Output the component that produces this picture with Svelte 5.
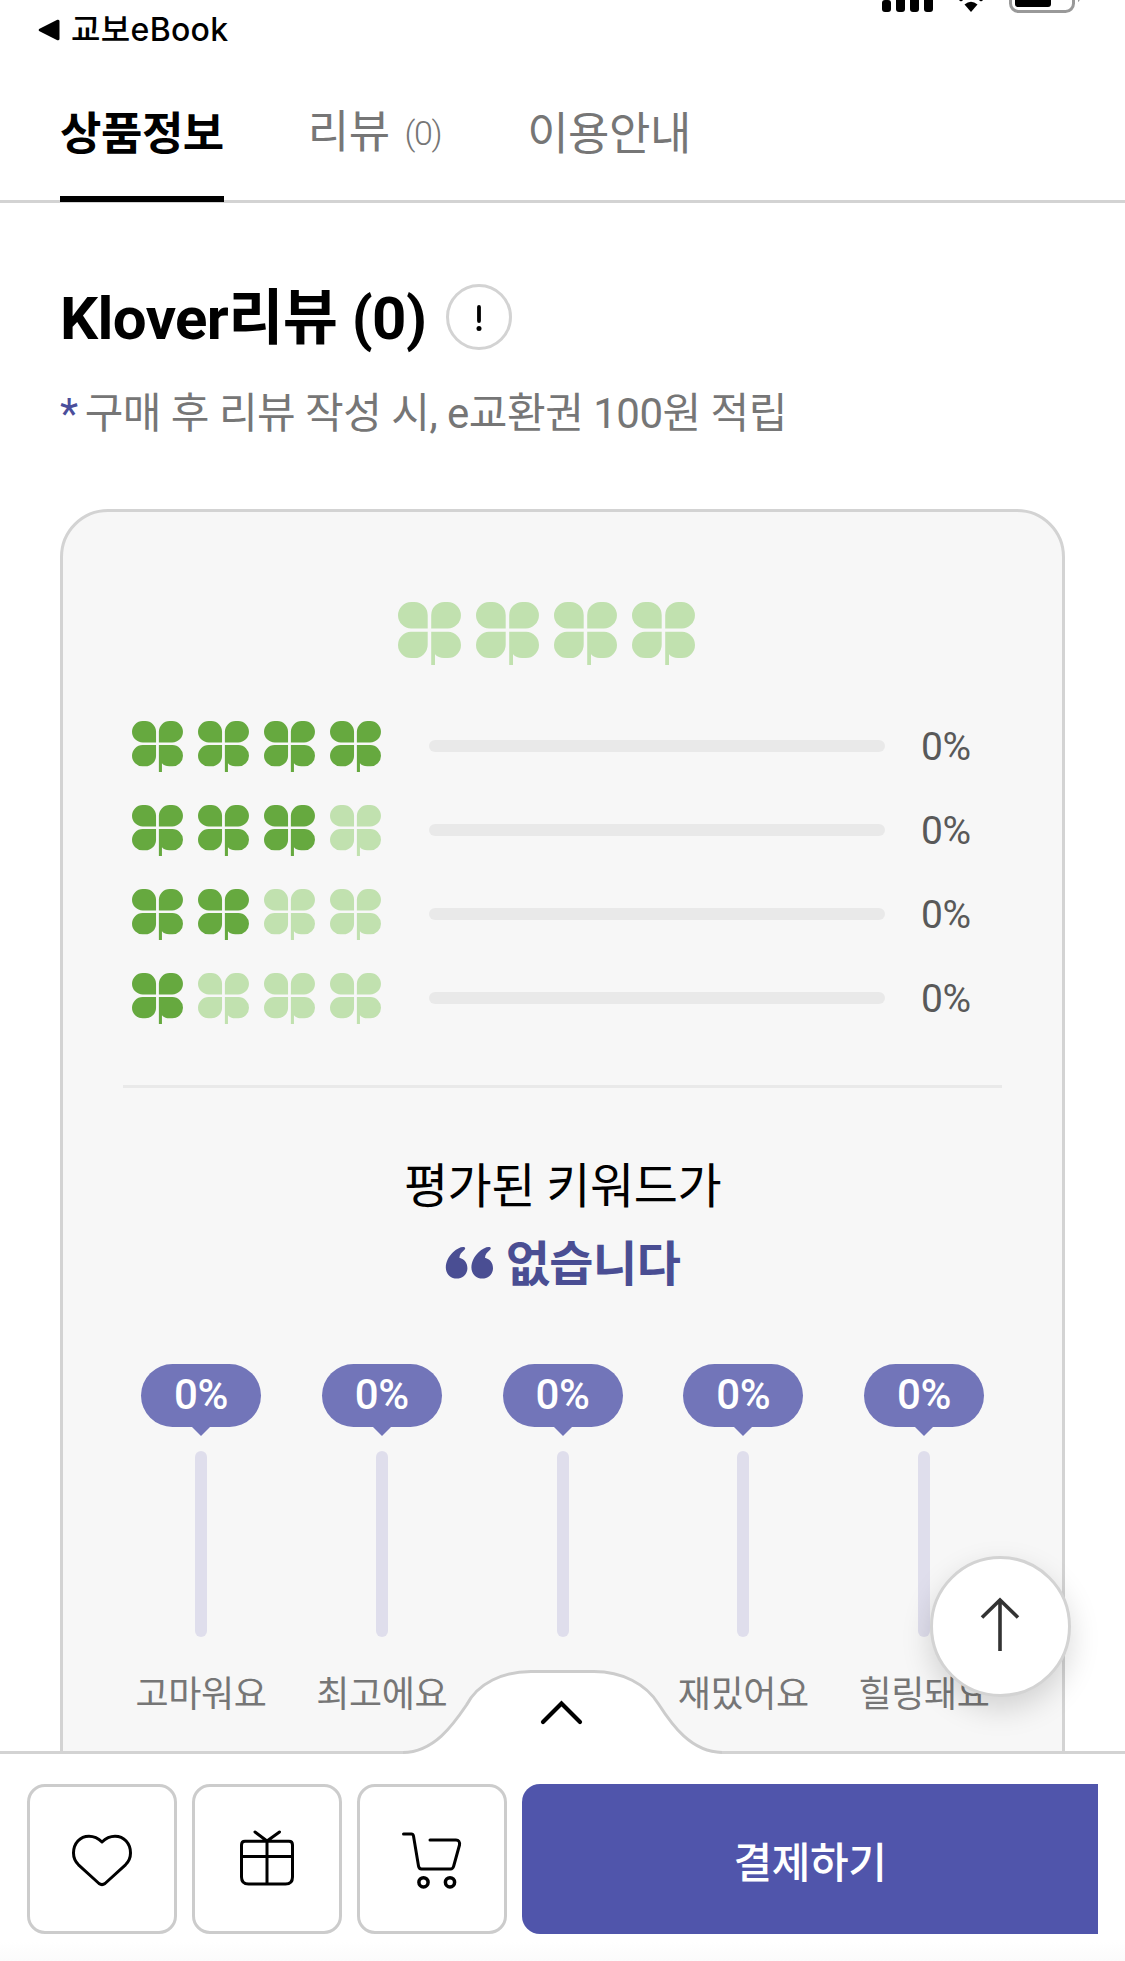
<script>
  const grades = [
    { score: 4, percent: 0 },
    { score: 3, percent: 0 },
    { score: 2, percent: 0 },
    { score: 1, percent: 0 }
  ];

  const keywords = [
    { label: "고마워요", percent: 0 },
    { label: "최고에요", percent: 0 },
    { label: "", percent: 0 },
    { label: "재밌어요", percent: 0 },
    { label: "힐링돼요", percent: 0 }
  ];
</script>

{#snippet clover(on)}
  <svg class="clover" class:on viewBox="0 0 63 63" aria-hidden="true">
    <path d="M29.7 26.5H13.25A13.25 13.25 0 0 1 13.25 0H16.5A13.2 13.2 0 0 1 29.7 13.2Z" />
    <path d="M33.2 26.5H49.7A13.25 13.25 0 0 0 49.7 0H46.4A13.2 13.2 0 0 0 33.2 13.2Z" />
    <path d="M29.7 29.8H13.1A13.1 13.1 0 0 0 13.1 56H16.5A13.2 13.2 0 0 0 29.7 42.8Z" />
    <path d="M33.2 29.8V63H37V52.3C39.5 55 42 56 46 56H49.9A13.1 13.1 0 0 0 49.9 29.8Z" />
  </svg>
{/snippet}

<div class="page">
  <main class="content">
    <header class="status">
      <div class="back">
        <svg width="22" height="22" viewBox="0 0 22 22"><path d="M20 2.2V19.8L2.2 11Z" stroke="#000" stroke-width="3" stroke-linejoin="round" /></svg>
        <span>교보eBook</span>
      </div>
      <svg class="indicators" width="200" height="14" viewBox="0 0 200 14">
        <rect x="2" y="0" width="9" height="12" rx="3" />
        <rect x="16" y="-6" width="9" height="18" rx="3" />
        <rect x="30" y="-6" width="9" height="18" rx="3" />
        <rect x="44" y="-6" width="9" height="18" rx="3" />
        <path d="M84.5 4.5Q91 -1 97.5 4.5L91 12Z" />
        <path d="M79.5 0Q81 2 82.5 0ZM99.5 0Q101 2 102.5 0Z" stroke="#000" />
        <rect x="130.5" y="-20" width="63" height="31.5" rx="8" fill="none" stroke="#999" stroke-width="3" />
        <rect x="135" y="-10" width="36" height="17" rx="3" />
        <path d="M198 -4V2Q200 1 200 -2Z" fill="#999" />
      </svg>
    </header>

    <nav class="tabs">
      <a class="tab active" href="#info">상품정보</a>
      <a class="tab with-count" href="#review">리뷰 <span class="count">(0)</span></a>
      <a class="tab" href="#guide">이용안내</a>
    </nav>

    <section class="review">
      <div class="title">
        <h2>Klover리뷰 (0)</h2>
        <button class="info" aria-label="리뷰 안내">
          <svg width="60" height="60" viewBox="0 0 60 60"><path d="M30 20V34" stroke="#000" stroke-width="3.8" stroke-linecap="round" /><circle cx="30" cy="41.500" r="2.5" /></svg>
        </button>
      </div>
      <p class="notice"><span class="star">*</span>구매 후 리뷰 작성 시, e교환권 100원 적립</p>

      <div class="card">
        <div class="total">
          {#each [1, 2, 3, 4] as n}
            {@render clover(false)}
          {/each}
        </div>

        <ul class="grades">
          {#each grades as grade}
            <li>
              <div class="clovers">
                {#each [1, 2, 3, 4] as n}
                  {@render clover(n <= grade.score)}
                {/each}
              </div>
              <div class="bar"><div class="fill" style="width: {grade.percent}%"></div></div>
              <span class="percent">{grade.percent}%</span>
            </li>
          {/each}
        </ul>

        <div class="best">
          <p>평가된 키워드가</p>
          <p class="none">
            <svg width="49" height="34" viewBox="0 0 49 34">
              <path id="quote" d="M19.5 1.2C16.5 .4 12 2.6 8 6.2C3.4 10.4 .8 16 .8 21.5C.8 28 5.6 32.6 11.6 32.6C17.8 32.6 22.4 28 22.4 22.2C22.4 17 19.6 13.4 14.4 11.8C14.6 8.4 16.4 6.4 19 4.2C20.4 3 20.6 1.8 19.5 1.2Z" />
              <use href="#quote" x="25.6" />
            </svg>
            <strong>없습니다</strong>
          </p>
        </div>

        <ul class="keywords">
          {#each keywords as keyword}
            <li>
              <span class="bubble">{keyword.percent}%</span>
              <div class="track"><div class="level" style="height: {keyword.percent}%"></div></div>
              <span class="label">{keyword.label}</span>
            </li>
          {/each}
        </ul>
      </div>
    </section>
  </main>

  <footer class="actions">
    <!-- raised handle of the bottom sheet -->
    <svg class="handle" width="330" height="87" viewBox="0 0 330 87">
      <path d="M4 87V83.5C35 83 54 55 67.500 35C79 13 104 1.5 132 1.5H195C223 1.5 247 14 259.500 34C273 55 292 83 323 83.5V87Z" fill="#fff" />
      <path d="M4 82.500C35 82 54 55 67.500 35C79 13 104 1.5 132 1.5H195C223 1.5 247 14 259.500 34C273 55 292 82 323 82.500" fill="none" stroke="#ccc" stroke-width="3" />
      <path d="M144 52L162.500 33.500L181 52" fill="none" stroke="#000" stroke-width="4.2" stroke-linecap="round" />
    </svg>

    <button class="top" aria-label="맨 위로">
      <svg width="72" height="72" viewBox="-36 -36 72 72"><path d="M-1 26V-25M-19 -7.500L-1 -25L17 -7.500" /></svg>
    </button>

    <button class="icon" aria-label="찜하기">
      <svg width="72" height="72" viewBox="-36 -36 72 72"><path d="M0 -17C-4 -21 -8 -22.800 -13 -22.800C-22 -22.800 -28.500 -15.500 -28.500 -6C-28.500 -1 -26.800 2.500 -23.500 5.800L-3 24.500C-1 26 1 26 3 24.500L23.500 5.800C26.800 2.500 28.500 -1 28.500 -6C28.500 -15.500 22 -22.800 13 -22.800C8 -22.800 4 -21 0 -17Z" /></svg>
    </button>
    <button class="icon" aria-label="선물하기">
      <svg width="72" height="72" viewBox="-36 -36 72 72"><path d="M-22 -17.800H22Q25.500 -17.800 25.500 -14V18Q25.500 25 18.500 25H-18.500Q-25.500 25 -25.500 18V-14Q-25.500 -17.800 -22 -17.800ZM-25.500 -2.500H25.500M0 -17.800V25M-12 -27L0 -18L12.500 -27" /></svg>
    </button>
    <button class="icon" aria-label="장바구니">
      <svg width="72" height="72" viewBox="-36 -36 72 72"><path d="M-28.500 -25H-20.500Q-19 -25 -18.500 -23L-13.500 7Q-13 10 -10.500 10H18.500Q21 10 21.700 7L27.500 -14Q28 -19 24 -19H-2" /><circle class="wheel" cx="-8.500" cy="23.300" r="4.600" /><circle class="wheel" cx="18" cy="23.300" r="4.600" /></svg>
    </button>
    <button class="buy">결제하기</button>
  </footer>
</div>

<style>
  :global(body) {
    margin: 0;
    background: #fff;
  }

  .page {
    display: flex;
    flex-direction: column;
    height: 1961px;
    overflow: hidden;
    background: #fff;
    color: #000;
    font-family: Roboto, "Noto Sans CJK KR", sans-serif;
  }

  .page :global(*) { box-sizing: border-box; letter-spacing: -0.01em; }
  p, h2, ul { margin: 0; padding: 0; }
  ul { list-style: none; }
  svg { display: block; flex: none; }
  button { padding: 0; font: inherit; }

  .content {
    flex: 1;
    min-height: 0;
    overflow: hidden;
  }

  .status {
    display: flex;
    justify-content: space-between;
    height: 60px;
    padding: 0 45px 0 38px;
  }
  .back {
    display: flex;
    align-items: center;
    gap: 11px;
    font: 500 32px/58px Inter, "Noto Sans CJK KR", sans-serif;
  }
  .back span { letter-spacing: 0.01em; }

  .tabs {
    display: flex;
    gap: 84px;
    height: 143px;
    padding: 0 60px;
    border-bottom: 3px solid #d3d3d3;
    font-size: 45px;
    line-height: 149px;
  }
  .tab {
    height: 142px;
    color: #767676;
    text-decoration: none;
  }
  .tab.active {
    border-bottom: 6px solid #000;
    color: #000;
    font-weight: 700;
  }
  .with-count { line-height: 146px; }
  .count {
    display: inline-block;
    margin: 0 2px 0 4px;
    font-size: 34px;
    font-weight: 300;
    line-height: 40px;
    letter-spacing: -0.04em;
    vertical-align: 3px;
  }

  .review { padding: 81px 60px 0; }
  .title {
    display: flex;
    align-items: center;
    gap: 20px;
  }
  h2 {
    padding-top: 3px;
    font-size: 60px;
    line-height: 62px;
    font-weight: 700;
    letter-spacing: -0.012em;
  }
  .info {
    width: 66px;
    height: 66px;
    border: 3px solid #d3d3d3;
    border-radius: 50%;
    background: #fff;
  }
  .notice {
    margin-top: 32px;
    color: #767676;
    font-size: 42px;
    line-height: 63px;
    letter-spacing: -0.012em;
  }
  .star {
    margin-right: 7px;
    color: #4a4e9b;
  }

  .card {
    height: 1500px;
    margin-top: 64px;
    padding: 90px 60px 0;
    border: 3px solid #d3d3d3;
    border-radius: 48px;
    background: #f7f7f7;
  }
  .clover { fill: #c1e1af; }
  .clover.on { fill: #66a93f; }

  .total {
    display: flex;
    justify-content: center;
    gap: 15px;
    padding-right: 32px;
  }
  .total .clover { width: 63px; height: 63px; }

  .grades {
    display: grid;
    gap: 33px;
    margin-top: 56px;
    padding: 0 27px 0 9px;
  }
  .grades li {
    display: flex;
    align-items: center;
    height: 51px;
  }
  .clovers { display: flex; gap: 15px; }
  .clovers .clover { width: 51px; height: 51px; }
  .bar {
    flex: 1;
    height: 12px;
    margin: 0 36px 2px 48px;
    border-radius: 6px;
    background: #e9e9e9;
  }
  .fill { height: 100%; border-radius: 6px; background: #66a93f; }
  .percent {
    width: 54px;
    padding-top: 2px;
    color: #595959;
    font-size: 39px;
    line-height: 51px;
  }

  .best {
    margin-top: 61px;
    padding-top: 60px;
    border-top: 3px solid #e9e9e9;
    font-size: 48px;
    line-height: 78px;
    text-align: center;
  }
  .none {
    display: flex;
    justify-content: center;
    align-items: center;
    gap: 12px;
    color: #4a4e93;
  }
  .none svg { margin-bottom: 4px; fill: #4a4e93; }

  .keywords {
    display: flex;
    justify-content: space-between;
    margin: 60px 15px 0;
  }
  .keywords li {
    display: flex;
    flex-direction: column;
    align-items: center;
    width: 126px;
  }
  .bubble {
    position: relative;
    width: 120px;
    height: 63px;
    border-radius: 32px;
    background: #7275b9;
    color: #fff;
    font-size: 42px;
    font-weight: 500;
    line-height: 62px;
    text-align: center;
  }
  .bubble::after {
    content: "";
    position: absolute;
    top: 63px;
    left: 51px;
    border: 9px solid transparent;
    border-top-color: #7275b9;
    border-bottom: 0;
  }
  .track {
    display: flex;
    align-items: flex-end;
    width: 12px;
    height: 186px;
    margin-top: 24px;
    border-radius: 6px;
    background: #dfdeec;
  }
  .level { width: 100%; background: #7275b9; }
  .label {
    margin-top: 31px;
    color: #767676;
    font-size: 36px;
    line-height: 54px;
    white-space: nowrap;
  }

  .actions {
    position: relative;
    display: flex;
    gap: 15px;
    height: 210px;
    padding: 30px 27px 27px;
    border-top: 3px solid #d3d3d3;
    background: linear-gradient(#fff 188px, #fbfbfb);
  }
  .handle {
    position: absolute;
    top: -84px;
    left: 399px;
  }
  .top {
    position: absolute;
    top: -198px;
    right: 54px;
    display: flex;
    justify-content: center;
    align-items: center;
    width: 141px;
    height: 141px;
    padding-bottom: 3px;
    border: 3px solid #d3d3d3;
    border-radius: 50%;
    background: #fff;
    box-shadow: 0 12px 30px rgba(0, 0, 0, 0.15);
  }
  .top svg {
    fill: none;
    stroke: #333;
    stroke-width: 3.6;
  }
  .icon {
    display: flex;
    justify-content: center;
    align-items: center;
    width: 150px;
    height: 150px;
    border: 3px solid #ccc;
    border-radius: 18px;
    background: #fff;
  }
  .icon svg {
    fill: none;
    stroke: #000;
    stroke-width: 3;
    stroke-linecap: round;
    stroke-linejoin: round;
  }
  .icon .wheel { stroke-width: 3.5; }
  .buy {
    flex: 1;
    height: 150px;
    border: 0;
    border-radius: 18px 0 0 18px;
    background: #5055ab;
    color: #fff;
    font-size: 42px;
    font-weight: 500;
  }
</style>
